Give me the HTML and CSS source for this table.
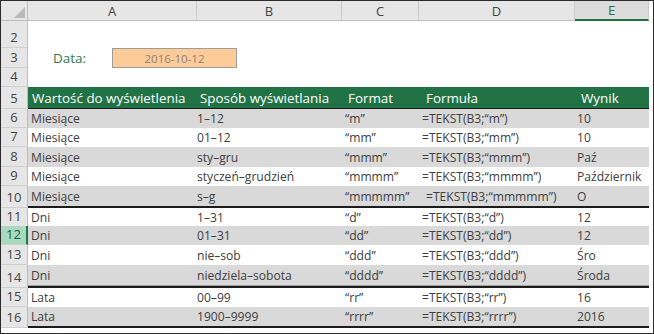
FILE: index.html
```html
<!DOCTYPE html>
<html lang="pl">
<head>
<meta charset="utf-8">
<link rel="stylesheet" href="styles.css">
</head>
<body>
<div class="frame">
  <div class="sheet">
    <div class="row colhdr">
      <div class="ch corner"><svg width="27" height="20" viewBox="0 0 27 20"><polygon points="13,17 24,17 24,6" fill="#b9b9b9"/></svg></div>
      <div class="ch">A</div>
      <div class="ch">B</div>
      <div class="ch">C</div>
      <div class="ch">D</div>
      <div class="ch sel">E</div>
    </div>

    <div class="row h27"><div class="rh">2</div><div class="blank"></div></div>
    <div class="row h20"><div class="rh">3</div>
      <div class="datecell"><span class="datelbl">Data:</span><span class="datebox">2016-10-12</span></div>
    </div>
    <div class="row h19"><div class="rh">4</div><div class="blank"></div></div>

    <div class="row h22 head">
      <div class="rh">5</div>
      <div class="c a">Wartość do wyświetlenia</div>
      <div class="c b">Sposób wyświetlania</div>
      <div class="c cc">Format</div>
      <div class="c d">Formuła</div>
      <div class="c e">Wynik</div>
    </div>

    <div class="row h19 band"><div class="rh">6</div><div class="c a">Miesiące</div><div class="c b">1–12</div><div class="c cc">“m”</div><div class="c d">=TEKST(B3;“m”)</div><div class="c e">10</div></div>
    <div class="row h19"><div class="rh">7</div><div class="c a">Miesiące</div><div class="c b">01–12</div><div class="c cc">“mm”</div><div class="c d">=TEKST(B3;“mm”)</div><div class="c e">10</div></div>
    <div class="row h20 band"><div class="rh">8</div><div class="c a">Miesiące</div><div class="c b">sty–gru</div><div class="c cc">“mmm”</div><div class="c d">=TEKST(B3;“mmm”)</div><div class="c e">Paź</div></div>
    <div class="row h19"><div class="rh">9</div><div class="c a">Miesiące</div><div class="c b">styczeń–grudzień</div><div class="c cc">“mmmm”</div><div class="c d">=TEKST(B3;“mmmm”)</div><div class="c e">Październik</div></div>
    <div class="row h22 band line"><div class="rh">10</div><div class="c a">Miesiące</div><div class="c b">s–g</div><div class="c cc">“mmmmm”</div><div class="c d shift">=TEKST(B3;“mmmmm”)</div><div class="c e">O</div></div>

    <div class="row h18"><div class="rh">11</div><div class="c a">Dni</div><div class="c b">1–31</div><div class="c cc">“d”</div><div class="c d">=TEKST(B3;“d”)</div><div class="c e">12</div></div>
    <div class="row h19 band"><div class="rh selrow">12</div><div class="c a">Dni</div><div class="c b">01–31</div><div class="c cc">“dd”</div><div class="c d">=TEKST(B3;“dd”)</div><div class="c e">12</div></div>
    <div class="row h20"><div class="rh">13</div><div class="c a">Dni</div><div class="c b">nie–sob</div><div class="c cc">“ddd”</div><div class="c d">=TEKST(B3;“ddd”)</div><div class="c e">Śro</div></div>
    <div class="row h23 band dline"><div class="rh">14</div><div class="c a">Dni</div><div class="c b">niedziela–sobota</div><div class="c cc">“dddd”</div><div class="c d">=TEKST(B3;“dddd”)</div><div class="c e">Środa</div></div>

    <div class="row h19"><div class="rh">15</div><div class="c a">Lata</div><div class="c b">00–99</div><div class="c cc">“rr”</div><div class="c d">=TEKST(B3;“rr”)</div><div class="c e">16</div></div>
    <div class="row h21 band line"><div class="rh">16</div><div class="c a">Lata</div><div class="c b">1900–9999</div><div class="c cc">“rrrr”</div><div class="c d">=TEKST(B3;“rrrr”)</div><div class="c e">2016</div></div>
  </div>
</div>
</body>
</html>
```

FILE: styles.css
```css
html, body {
  margin: 0;
  padding: 0;
  background: #ffffff;
}

.frame {
  width: 654px;
  height: 334px;
  box-sizing: border-box;
  border: 1px solid #2c2c2c;
  background: #ffffff;
  overflow: hidden;
}

.sheet {
  width: 648px;
}

.row {
  display: grid;
  grid-template-columns: 27px 169px 145px 77px 156px 74px;
}

.h18 { height: 18px; }
.h19 { height: 19px; }
.h20 { height: 20px; }
.h21 { height: 21px; }
.h22 { height: 22px; }
.h23 { height: 23px; }
.h27 { height: 27px; }

/* column header */
.colhdr {
  height: 20px;
}

.ch {
  box-sizing: border-box;
  background: #e6e6e6;
  border-right: 1px solid #cacaca;
  border-bottom: 1px solid #bdbdbd;
  display: flex;
  align-items: center;
  justify-content: center;
  font-family: "Open Sans", "Noto Sans", sans-serif;
  font-size: 13px;
  color: #444444;
}

.ch.corner {
  position: relative;
  border-right-color: #bdbdbd;
}

.ch.corner svg {
  display: block;
  position: absolute;
  left: 0;
  top: 0;
}

.ch.sel {
  background: #dcdcdc;
  color: #217346;
  border-bottom: 2px solid #217346;
}

/* row header */
.rh {
  box-sizing: border-box;
  background: #e6e6e6;
  border-right: 1px solid #bdbdbd;
  border-bottom: 1px solid #d0d0d0;
  display: flex;
  align-items: flex-end;
  justify-content: center;
  padding-bottom: 1px;
  font-family: "Open Sans", "Noto Sans", sans-serif;
  font-size: 13px;
  line-height: 17px;
  color: #444444;
}

.rh.selrow {
  background: #a7dabe;
  color: #1d5e3a;
  border-right: 2px solid #217346;
}

.blank {
  grid-column: 2 / 7;
}

/* date */
.datecell {
  grid-column: 2 / 7;
  display: flex;
  align-items: stretch;
  padding-left: 25px;
}

.datelbl {
  width: 59px;
  display: flex;
  align-items: center;
  font-family: "Open Sans", "Noto Sans", sans-serif;
  font-size: 13.5px;
  color: #2f7a55;
}

.datebox {
  box-sizing: border-box;
  width: 125px;
  background: #fdcb98;
  border: 1px solid #9c9c9c;
  display: flex;
  align-items: center;
  justify-content: center;
  font-family: "Open Sans", "Noto Sans", sans-serif;
  font-size: 11.5px;
  color: #8e827c;
}

/* data cells */
.c {
  box-sizing: border-box;
  display: flex;
  align-items: center;
  white-space: nowrap;
  overflow: visible;
  font-family: "Open Sans", "Noto Sans", sans-serif;
  font-size: 12.1px;
  color: #404040;
}

.c.a { padding-left: 3px; }
.c.b { padding-left: 0; }
.c.cc { padding-left: 3px; }
.c.d { padding-left: 3px; }
.c.e { padding-left: 2px; }
.c.d.shift { padding-left: 7px; }

.band .c {
  background: #d9d9d9;
}

.head .c {
  background: #217346;
  color: #ffffff;
  font-size: 13.4px;
  border-bottom: 1px solid #1c1c1c;
  padding-top: 1px;
}

.head .c.a { padding-left: 4px; }
.head .c.b { padding-left: 3px; }
.head .c.cc { padding-left: 6px; }
.head .c.d { padding-left: 7px; }
.head .c.e { padding-left: 6px; }

.line .c {
  border-bottom: 2px solid #1c1c1c;
}

.dline .c {
  border-bottom: 2px solid #1c1c1c;
  box-shadow: inset 0 -1px 0 #a0a0a0;
}
```
